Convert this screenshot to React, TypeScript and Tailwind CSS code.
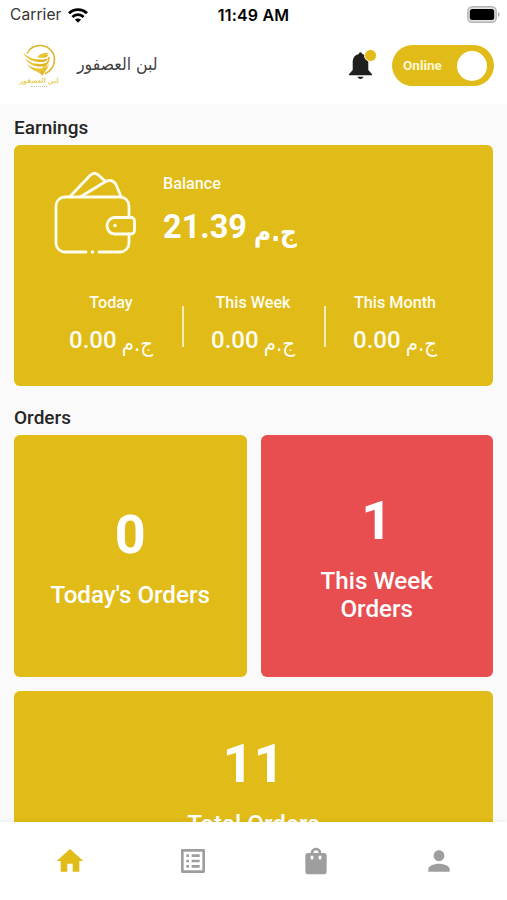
import React from 'react';
import { MdHome, MdListAlt, MdPerson, MdShoppingBag } from 'react-icons/md';

const earnings = [
  { label: 'Today', value: '0.00' },
  { label: 'This Week', value: '0.00' },
  { label: 'This Month', value: '0.00' },
];

const StatusBar: React.FC = () => (
  <div className="h-[30px] px-[10px] flex items-center justify-between font-['Inter',sans-serif] text-black">
    <div className="w-[150px] flex items-center gap-[6px]">
      <span className="text-[15.5px] leading-5 tracking-[0.1px] text-[#333]">Carrier</span>
      <svg width="20" height="15" viewBox="0 0 20 15" fill="none" stroke="#000" strokeWidth="2.8">
        <path d="M1 5.3C6 .3 14 .3 19 5.3" />
        <path d="M4.4 8.9c3.2-3.1 8-3.1 11.2 0" />
        <path d="M10 14.8 6.9 11.6c1.7-1.6 4.5-1.6 6.2 0z" fill="#000" stroke="none" />
      </svg>
    </div>
    <span className="-ml-[3px] text-[16px] leading-5 tracking-[0.2px] font-semibold">11:49 AM</span>
    <div className="w-[150px] -mr-[3px] -mt-[2px] flex justify-end">
      <svg width="33" height="17" viewBox="0 0 33 17">
        <rect x=".8" y=".8" width="28.4" height="15.4" rx="4.5" fill="#e4e4e4" stroke="#b4b4b4" strokeWidth="1.4" />
        <rect x="2.8" y="3" width="24.4" height="11" rx="2.5" fill="#000" />
        <path d="M31 6v5c2-.8 2-4.2 0-5z" fill="#a8a8a8" />
      </svg>
    </div>
  </div>
);

const Logo: React.FC = () => (
  <div className="w-[38px] h-[46px] flex flex-col items-center">
    <svg width="38" height="34" viewBox="0 0 38 34" className="shrink-0">
      <defs>
        <linearGradient id="gold" x1="0" y1="0" x2="1" y2="1">
          <stop offset="0" stopColor="#d3a51a" />
          <stop offset=".5" stopColor="#ecca35" />
          <stop offset="1" stopColor="#cf9f12" />
        </linearGradient>
      </defs>
      <path d="M7 9.5C10 3.5 15 1.5 20 1.5c8.500 0 14.500 6.500 14.500 14.300 0 6.200-4 11.700-9.500 14" fill="none" stroke="#dcb42a" strokeWidth="1.6" />
      <path d="M3 8.500c5 5 10 6.500 17 7 3 .2 5.500-.2 8-1.500-1 3-3.500 4-6.500 4C13 18 7 15.500 3 8.500z" fill="url(#gold)" />
      <path d="M4.500 14c5 4.500 9 5.800 15.500 6 3.500 0 6-.8 8-3-.8 4-4 5.500-8 5.500-6.500 0-11.500-2.500-15.500-8.500z" fill="url(#gold)" />
      <path d="M7 20c4 3.500 7.500 4.500 12 4.500 4 0 7-1 10-4-1.500 5-5 8-7 11.500-1-4.500-10-4-15-12z" fill="url(#gold)" />
      <path d="M17.500 13.500c2-3.500 5-5 12-4.500l-3 1.500c1.300.2 1.800.7 1.500 1.500-2 1.800-6 2.200-10.500 1.500z" fill="url(#gold)" />
      <path d="M29 13c0 5-2 8-6 11" fill="none" stroke="#e5c02d" strokeWidth="1.8" />
    </svg>
    <span dir="rtl" className="-mt-[1px] font-['DejaVu_Sans_Condensed','DejaVu_Sans',sans-serif] font-bold text-[7px] leading-[8px] whitespace-nowrap text-[#ebcf68]">
      لبن العصفور
    </span>
    <span className="mt-px w-[16px] border-t border-dotted border-[#cfc6a6]" />
  </div>
);

const Bell: React.FC = () => (
  <div className="relative w-[28px] h-[31px]">
    <svg width="24" height="28" viewBox="0 0 24 28" fill="#1f1f1f" className="absolute left-[0.5px] top-[3px]">
      <path d="M11.5.3c1 0 1.6.7 1.6 1.7 3.9.8 6.200 4 6.200 8.200v7.800l3.700 4.200v1H0v-1L3.700 18v-7.800c0-4.200 2.300-7.400 6.200-8.200 0-1 .6-1.700 1.600-1.700z" />
      <path d="M8.500 24.800h6c-.4 1.300-1.500 2.200-3 2.200s-2.600-.9-3-2.200z" />
    </svg>
    <span className="absolute left-[15.5px] top-0 w-[13px] h-[13px] rounded-full border border-white bg-[#e1bb17]" />
  </div>
);

const Wallet: React.FC = () => (
  <svg width="82" height="84" viewBox="0 0 82 84" fill="none" stroke="#fffdf0" strokeWidth="2.8" strokeLinecap="round" strokeLinejoin="round">
    <path d="M32 81H11c-5 0-9-4-9-9V35c0-5 4-9 9-9h55c5 0 9 4 9 9v11M75 63v9c0 5-4 9-9 9H45" />
    <path d="M16 25.500 36 4.500c3-3 6-3 9 0l6 5.500" />
    <path d="m27 25.500 23-14c5-3 9-3 12 2l5 12" />
    <path d="M61 46.500h16c2 0 3.500 1.500 3.500 3.500v9.500c0 2-1.500 3.500-3.500 3.500H61c-5 0-8-4-8-8.200s3-8.300 8-8.300z" />
    <circle cx="61" cy="54.5" r="1.7" fill="#fffdf0" stroke="none" />
    <circle cx="38.5" cy="81" r="1.8" fill="#fffdf0" stroke="none" />
  </svg>
);

const OrderCard: React.FC<{ count: number; label: string; className: string }> = ({ count, label, className }) => (
  <div className={`rounded-[6px] flex flex-col items-center justify-center text-white ${className}`}>
    <p className="text-[54px] leading-[63px] font-bold">{count}</p>
    <p className="mt-[15px] text-[24.2px] leading-[28px] font-medium text-center">{label}</p>
  </div>
);

const App: React.FC = () => {
  return (
    <div className="w-[507px] h-[900px] overflow-hidden flex flex-col bg-[#fafafa] font-['Roboto','DejaVu_Sans',sans-serif]">
      <header className="h-[104px] shrink-0 bg-white">
        <StatusBar />
        <div className="pt-[14px] pl-[20px] pr-[13px] flex items-start">
          <Logo />
          <span dir="rtl" className="ml-[19px] mt-[6px] font-['DejaVu_Sans_Condensed','DejaVu_Sans',sans-serif] text-[17.5px] leading-7 whitespace-nowrap text-[#444]">
            لبن العصفور
          </span>
          <div className="ml-auto mt-[5px] flex">
            <Bell />
          </div>
          <div className="ml-[16px] mt-[1px] w-[102px] h-[41px] rounded-full bg-[#e1bb17] flex items-center justify-between pl-[11px] pr-[7px]">
            <span className="text-[13.5px] font-bold text-[#fff8d5]">Online</span>
            <span className="w-[30px] h-[30px] rounded-full bg-white" />
          </div>
        </div>
      </header>

      <main className="flex-1 min-h-0 overflow-hidden px-[14px] pt-[13px]">
        <h2 className="h-[28px] text-[19px] leading-[22px] font-medium text-[#252525]">Earnings</h2>
        <section className="h-[241px] rounded-[6px] bg-[#e1bb17] text-[#fffdf0]">
          <div className="pt-[26px] pl-[40px] flex">
            <Wallet />
            <div className="ml-[27px] pt-[3px]">
              <p className="text-[16.2px] leading-[20px] font-medium">Balance</p>
              <p className="mt-[13px] flex items-baseline gap-[7px] text-[32.5px] leading-[40px] font-bold text-white whitespace-nowrap">
                21.39
                <span className="relative top-[3px] font-['DejaVu_Sans_Condensed','DejaVu_Sans',sans-serif] text-[26px]">ج.م</span>
              </p>
            </div>
          </div>
          <div className="mt-[38px] pl-[26px] pr-[27px] grid grid-cols-3">
            {earnings.map((e, i) => (
              <div key={e.label} className="relative text-center">
                <p className="text-[16.2px] leading-[20px] font-medium">{e.label}</p>
                <p className="mt-[12px] flex items-baseline justify-center gap-[5px] text-[24px] leading-[30px] font-medium whitespace-nowrap">
                  {e.value}
                  <span className="relative top-[3px] font-['DejaVu_Sans_Condensed','DejaVu_Sans',sans-serif] text-[22px]">ج.م</span>
                </p>
                {i > 0 && <span className="absolute left-0 top-[13px] w-[2px] h-[41px] bg-[#f9edb5]" />}
              </div>
            ))}
          </div>
        </section>

        <h2 className="mt-[21px] h-[28px] text-[19px] leading-[22px] font-medium text-[#252525]">Orders</h2>
        <section className="grid grid-cols-2 gap-[14px]">
          <OrderCard count={0} label="Today's Orders" className="h-[242px] bg-[#e1bb17] px-[20px]" />
          <OrderCard count={1} label="This Week Orders" className="h-[242px] bg-[#e84e50] px-[50px]" />
          <OrderCard count={11} label="Total Orders" className="h-[187px] bg-[#e1bb17] col-span-2" />
        </section>
      </main>

      <nav className="h-[78px] shrink-0 bg-white grid grid-cols-4 pl-[8px] pr-[7px] text-[#9e9e9e] shadow-[0_-1px_4px_rgba(0,0,0,0.06)]">
        <span className="pt-[23px] flex justify-center"><MdHome size={32} color="#e1bb17" /></span>
        <span className="pt-[23px] flex justify-center"><MdListAlt size={32} /></span>
        <span className="pt-[23px] flex justify-center"><MdShoppingBag size={32} /></span>
        <span className="pt-[23px] flex justify-center"><MdPerson size={32} /></span>
      </nav>
    </div>
  );
};

export default App;
